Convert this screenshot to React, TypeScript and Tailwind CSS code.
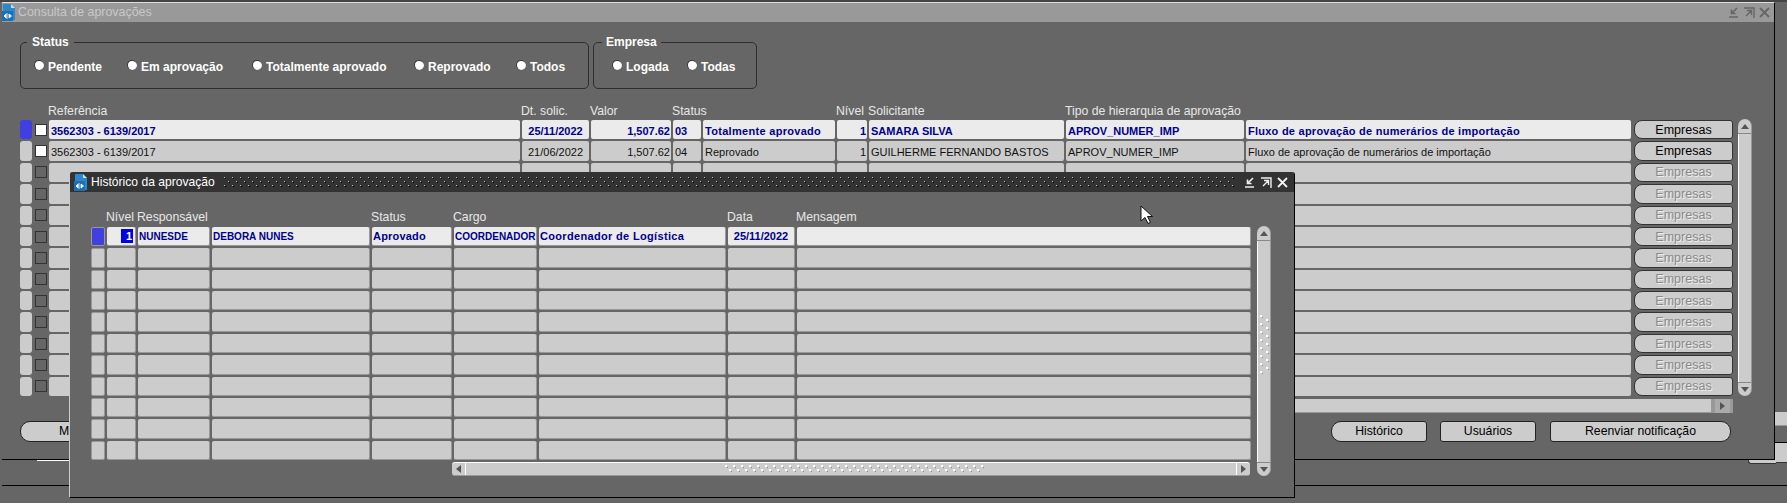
import React from 'react';

const mainCols = 'grid grid-cols-[13px_12px_471px_67px_80px_28px_132px_30px_195px_178px_385px_100px] gap-x-[2px]';
const modalCols = 'grid grid-cols-[14px_29px_72px_158px_80px_83px_187px_67px_454px] gap-x-[2px]';

const mainRows = [
  ['3562303 - 6139/2017', '25/11/2022', '1,507.62', '03', 'Totalmente aprovado', '1', 'SAMARA SILVA', 'APROV_NUMER_IMP', 'Fluxo de aprovação de numerários de importação'],
  ['3562303 - 6139/2017', '21/06/2022', '1,507.62', '04', 'Reprovado', '1', 'GUILHERME FERNANDO BASTOS', 'APROV_NUMER_IMP', 'Fluxo de aprovação de numerários de importação'],
];
const mainAlign = ['pl-[2px]', 'justify-center', 'justify-end pr-[1px]', 'pl-[2px]', 'pl-[2px]', 'justify-end pr-[1px]', 'pl-[2px]', 'pl-[2px]', 'pl-[2px]'];
const mainBold = ['', '', '', '', 'tracking-[0.3px]', '', '', '', 'tracking-[0.25px]'];

const modalValues = ['1', 'NUNESDE', 'DEBORA NUNES', 'Aprovado', 'COORDENADOR', 'Coordenador de Logística', '25/11/2022', ''];
const modalAlign = ['justify-end pr-[2px]', 'pl-[1px]', 'pl-[1px]', 'pl-[1px]', 'pl-[1px]', 'pl-[1px]', 'justify-center', 'pl-[1px]'];
const modalBold = ['', 'text-[10px] pt-[1px]', 'text-[10px] pt-[1px]', 'tracking-[0.2px]', 'text-[10px] pt-[1px]', 'tracking-[0.33px]', '', ''];

function FormsIcon() {
  return (
    <svg width="14" height="17" viewBox="0 0 14 17" className="shrink-0">
      <path d="M1 0h8l4 4v12H1z" fill="#2d88c9" />
      <path d="M9 0l4 4H9z" fill="#bfe0f5" />
      <rect x="0" y="7" width="11" height="10" fill="#1a6fb5" />
      <path d="M5 9v6M2 12l2-2v4zM7 10l2.500 2L7 14z" fill="#fff" stroke="#fff" strokeWidth="0.8" />
    </svg>
  );
}

function WindowButtons({ color, gap }: { color: string; gap: string }) {
  return (
    <div className={`flex items-center ${gap}`}>
      <svg width="11" height="11" viewBox="0 0 11 11" fill="none" stroke={color} strokeWidth="1.6">
        <path d="M0 10h9M8 1L3 6M2.500 2.500v4h4" />
      </svg>
      <svg width="11" height="11" viewBox="0 0 11 11" fill="none" stroke={color} strokeWidth="1.4">
        <path d="M0 1h10v10M2 9l5-5M3 3.500h4.500V8" />
      </svg>
      <svg width="11" height="11" viewBox="0 0 11 11" fill="none" stroke={color} strokeWidth="1.8">
        <path d="M1 1l9 9M10 1l-9 9" />
      </svg>
    </div>
  );
}

function Radio({ label, width }: { label: string; width: string }) {
  return (
    <div className={`flex items-start gap-[4px] ${width}`}>
      <span className="mt-[1px] w-[10px] h-[10px] rounded-full bg-white border-t border-l border-[#333]" />
      <span className="font-bold text-[12px] leading-[14px] mt-[1px] text-white">{label}</span>
    </div>
  );
}

function VScroll({ height, dots }: { height: string; dots?: boolean }) {
  return (
    <div className={`w-[14px] ${height} flex flex-col bg-[#ccc] rounded-t-[7px] rounded-b-[7px] border-r border-[#999]`}>
      <div className="h-[15px] flex items-center justify-center border-b border-[#888]">
        <svg width="8" height="5" viewBox="0 0 8 5"><path d="M4 0l4 5H0z" fill="#555" /></svg>
      </div>
      <div className="flex-1 border-l border-white flex justify-center">
        {dots && (
          <svg className="mt-[74px]" width="9" height="60" viewBox="0 0 9 60">
            <pattern id="vdots" width="6" height="8" patternUnits="userSpaceOnUse">
              <rect x="0" y="0" width="2" height="2" fill="#fff" />
              <rect x="2" y="2" width="1" height="1" fill="#888" />
            </pattern>
            <pattern id="vdots2" x="6" y="4" width="6" height="8" patternUnits="userSpaceOnUse">
              <rect x="0" y="0" width="2" height="2" fill="#fff" />
              <rect x="2" y="2" width="1" height="1" fill="#888" />
            </pattern>
            <rect width="3" height="60" fill="url(#vdots)" />
            <rect x="6" width="3" height="60" fill="url(#vdots2)" />
          </svg>
        )}
      </div>
      <div className="h-[14px] flex items-center justify-center border-t border-[#888]">
        <svg width="8" height="5" viewBox="0 0 8 5"><path d="M0 0h8L4 5z" fill="#555" /></svg>
      </div>
    </div>
  );
}

function EmpresasButton({ enabled }: { enabled: boolean }) {
  return (
    <div
      className={`ml-[1px] w-[99px] flex items-center justify-center bg-[#ccc] border border-[#333] rounded-l-[8px] rounded-r-[3px] text-[12.500px] ${
        enabled ? 'text-black' : 'text-[#8a8a8a] [text-shadow:1px_1px_0_#eee]'
      }`}
    >
      Empresas
    </div>
  );
}

function MainTable() {
  const headers = ['Referência', 'Dt. solic.', 'Valor', 'Status', '', 'Nível', 'Solicitante', 'Tipo de hierarquia de aprovação'];
  return (
    <div className="flex mt-[14px]">
      <div className="flex flex-col">
        <div className={`${mainCols} h-[17px] pt-[1px] text-[12.250px] leading-[15px] text-[#e6e6e6]`}>
          <span />
          <span />
          {headers.map((h, i) => (
            <span key={i} className="-ml-[1px] whitespace-nowrap">{h}</span>
          ))}
        </div>
        <div className="h-[276px] grid grid-rows-[repeat(13,1fr)] gap-y-[2px]">
          {Array.from({ length: 13 }).map((_, r) => {
            const row = mainRows[r];
            return (
              <div key={r} className={`${mainCols} min-h-0 text-[11px] leading-[14px]`}>
                <div className={`w-[12px] rounded-[3px] ${r === 0 ? 'bg-[#4040e0]' : 'bg-[#ccc]'}`} />
                <div className="flex items-center">
                  <span className={`w-[12px] h-[12px] border border-[#333] ${row ? 'bg-white' : 'bg-[#666]'}`} />
                </div>
                {mainAlign.map((align, c) => (
                  <div
                    key={c}
                    className={`flex items-center rounded-[2px] whitespace-nowrap overflow-hidden ${align} ${r === 0 ? `pt-[2px] bg-[#ebebeb] font-bold text-[#00008b] ${mainBold[c]}` : 'pt-[1px] bg-[#ccc] text-[#111]'}`}
                  >
                    {row ? row[c] : ''}
                  </div>
                ))}
                <EmpresasButton enabled={r < 2} />
              </div>
            );
          })}
        </div>
      </div>
      <div className="ml-[5px] mt-[16px]">
        <VScroll height="h-[277px]" />
      </div>
    </div>
  );
}

function Modal() {
  const headers = ['Nível', 'Responsável', '', 'Status', 'Cargo', '', 'Data', 'Mensagem'];
  return (
    <div className="absolute left-[69px] top-[172px] w-[1226px] h-[326px] flex flex-col bg-[#666] border-l border-[#ccc] border-r border-b border-r-black border-b-black rounded-t-[3px]">
      <div className="h-[20px] bg-[#333] rounded-t-[3px] flex items-center pl-[4px] pr-[6px]">
        <FormsIcon />
        <span className="ml-[3px] text-[12.100px] text-white whitespace-nowrap">Histórico da aprovação</span>
        <svg className="ml-[8px] flex-1 h-[12px]" height="12">
          <pattern id="grip" width="8" height="8" patternUnits="userSpaceOnUse">
            <rect x="1" y="1" width="1" height="1" fill="#bbb" />
            <rect x="2" y="2" width="1" height="1" fill="#000" />
            <rect x="5" y="5" width="1" height="1" fill="#bbb" />
            <rect x="6" y="6" width="1" height="1" fill="#000" />
          </pattern>
          <rect width="100%" height="12" fill="url(#grip)" />
        </svg>
        <div className="ml-[10px]">
          <WindowButtons color="#f0f0f0" gap="gap-[5px]" />
        </div>
      </div>
      <div className="flex pl-[21px] pt-[18px]">
        <div className="flex flex-col">
          <div className={`${modalCols} h-[17px] text-[12.250px] leading-[14px] text-[#e6e6e6]`}>
            <span />
            {headers.map((h, i) => (
              <span key={i} className="-ml-[1px] whitespace-nowrap">{h}</span>
            ))}
          </div>
          <div className="h-[233px] grid grid-rows-[repeat(11,1fr)] gap-y-[2px]">
            {Array.from({ length: 11 }).map((_, r) => (
              <div key={r} className={`${modalCols} min-h-0 text-[11px] leading-[14px]`}>
                <div className={`rounded-[2px] border border-[#999] ${r === 0 ? 'bg-[#4040e0]' : 'bg-[#ccc]'}`} />
                {modalValues.map((v, c) => (
                  <div
                    key={c}
                    className={`flex items-center rounded-[2px] border-r border-b border-[#999] whitespace-nowrap overflow-hidden ${modalAlign[c]} ${r === 0 ? `bg-[#ebebeb] font-bold text-[#00008b] ${modalBold[c]}` : 'bg-[#ccc]'}`}
                  >
                    {r === 0 && c === 0 ? (
                      <span className="w-[12px] h-[14px] bg-[#0000e6] text-white text-right pr-[1px]">{v}</span>
                    ) : r === 0 ? (
                      v
                    ) : (
                      ''
                    )}
                  </div>
                ))}
              </div>
            ))}
          </div>
          <div className="mt-[2px] ml-[361px] w-[798px] h-[14px] flex bg-[#ccc] border-t border-white border-b border-b-[#999] rounded-[3px]">
            <div className="w-[14px] flex items-center justify-center border-r border-white rounded-l-[6px]">
              <svg width="5" height="8" viewBox="0 0 5 8"><path d="M5 0v8L0 4z" fill="#555" /></svg>
            </div>
            <div className="flex-1 flex items-center pl-[258px]">
              <svg width="260" height="8">
                <pattern id="hdots" width="8" height="8" patternUnits="userSpaceOnUse">
                  <rect x="1" y="0" width="2" height="2" fill="#fff" />
                  <rect x="3" y="2" width="1" height="1" fill="#888" />
                  <rect x="5" y="4" width="2" height="2" fill="#fff" />
                  <rect x="7" y="6" width="1" height="1" fill="#888" />
                </pattern>
                <rect width="260" height="8" fill="url(#hdots)" />
              </svg>
            </div>
            <div className="w-[14px] flex items-center justify-center border-l border-white">
              <svg width="5" height="8" viewBox="0 0 5 8"><path d="M0 0v8l5-4z" fill="#555" /></svg>
            </div>
          </div>
        </div>
        <div className="ml-[6px] mt-[16px]">
          <VScroll height="h-[250px]" dots />
        </div>
      </div>
    </div>
  );
}

export default function App() {
  const btn = 'h-[21px] flex items-center justify-center bg-[#ccc] border border-[#222] text-[12.250px] text-black';
  return (
    <div className="relative w-[1787px] h-[503px] overflow-hidden bg-[#666] font-['Liberation_Sans',Arial,sans-serif]">
      <div className="h-[2px] bg-[#444]" />
      <div className="ml-[2px] w-[1773px] h-[458px] flex flex-col border-t border-[#ddd] border-r border-r-black border-b border-b-black">
        {/* title bar */}
        <div className="h-[19px] bg-[#999] flex items-center pr-[4px]">
          <FormsIcon />
          <span className="ml-[2px] text-[12.400px] text-[#c8c8c8] whitespace-nowrap">Consulta de aprovações</span>
          <div className="ml-auto">
            <WindowButtons color="#666" gap="gap-[4px]" />
          </div>
        </div>

        <div className="flex flex-col pl-[18px]">
          {/* filters */}
          <div className="flex gap-[4px] mt-[13px]">
            <fieldset className="w-[569px] h-[54px] border border-[#2e2e2e] rounded-[5px] pl-[13px]">
              <legend className="-ml-[7px] px-[5px] font-bold text-[12px] leading-[14px] text-white">Status</legend>
              <div className="flex mt-[10px]">
                <Radio label="Pendente" width="w-[93px]" />
                <Radio label="Em aprovação" width="w-[125px]" />
                <Radio label="Totalmente aprovado" width="w-[162px]" />
                <Radio label="Reprovado" width="w-[102px]" />
                <Radio label="Todos" width="w-[60px]" />
              </div>
            </fieldset>
            <fieldset className="w-[164px] h-[54px] border border-[#2e2e2e] rounded-[5px] pl-[18px]">
              <legend className="-ml-[10px] px-[4px] font-bold text-[12px] leading-[14px] text-white">Empresa</legend>
              <div className="flex mt-[10px]">
                <Radio label="Logada" width="w-[75px]" />
                <Radio label="Todas" width="w-[60px]" />
              </div>
            </fieldset>
          </div>

          <MainTable />

          {/* bottom scrollbar */}
          <div className="mt-[3px] ml-[1046px] w-[667px] h-[14px] flex bg-[#ccc] border-b border-[#999]">
            <div className="flex-1" />
            <div className="w-[22px] bg-[#999] flex items-center justify-end pr-[3px]">
              <div className="w-[15px] h-[14px] bg-[#aaa] flex items-center justify-center">
                <svg width="5" height="8" viewBox="0 0 5 8"><path d="M0 0v8l5-4z" fill="#555" /></svg>
              </div>
            </div>
          </div>

          {/* buttons */}
          <div className="flex mt-[8px]">
            <div className={`${btn} w-[200px] !justify-start pl-[38px] rounded-l-[10px] rounded-r-[3px]`}>M</div>
            <div className={`${btn} w-[96px] ml-[1111px] rounded-l-[10px] rounded-r-[3px]`}>Histórico</div>
            <div className={`${btn} w-[96px] ml-[13px] rounded-[3px]`}>Usuários</div>
            <div className={`${btn} w-[181px] ml-[14px] rounded-l-[3px] rounded-r-[10px]`}>Reenviar notificação</div>
          </div>
        </div>
      </div>
      <div className="mt-[25px] ml-[2px] h-px bg-black" />

      {/* windows behind */}
      <div className="absolute left-[37px] top-[460px] w-[40px] h-px bg-white" />
      <div className="absolute left-[1775px] top-[412px] w-[12px] h-[14px] bg-[#ccc] border-b border-[#999]" />
      <div className="absolute left-[1775px] top-[442px] w-[12px] h-[21px] bg-[#ccc] border-t border-b border-t-black border-b-[#333]" />
      <div className="absolute left-[1748px] top-[460px] w-[28px] h-[4px] bg-[#ccc] rounded-bl-[3px] border-b border-l border-[#333]" />

      <Modal />

      <svg className="absolute left-[1140px] top-[205px]" width="14" height="20" viewBox="0 0 14 20">
        <path d="M1 1v15l4-3.500 3 6 2.500-1.200-3-5.800h5z" fill="#fff" stroke="#111" strokeWidth="1" />
      </svg>
    </div>
  );
}
